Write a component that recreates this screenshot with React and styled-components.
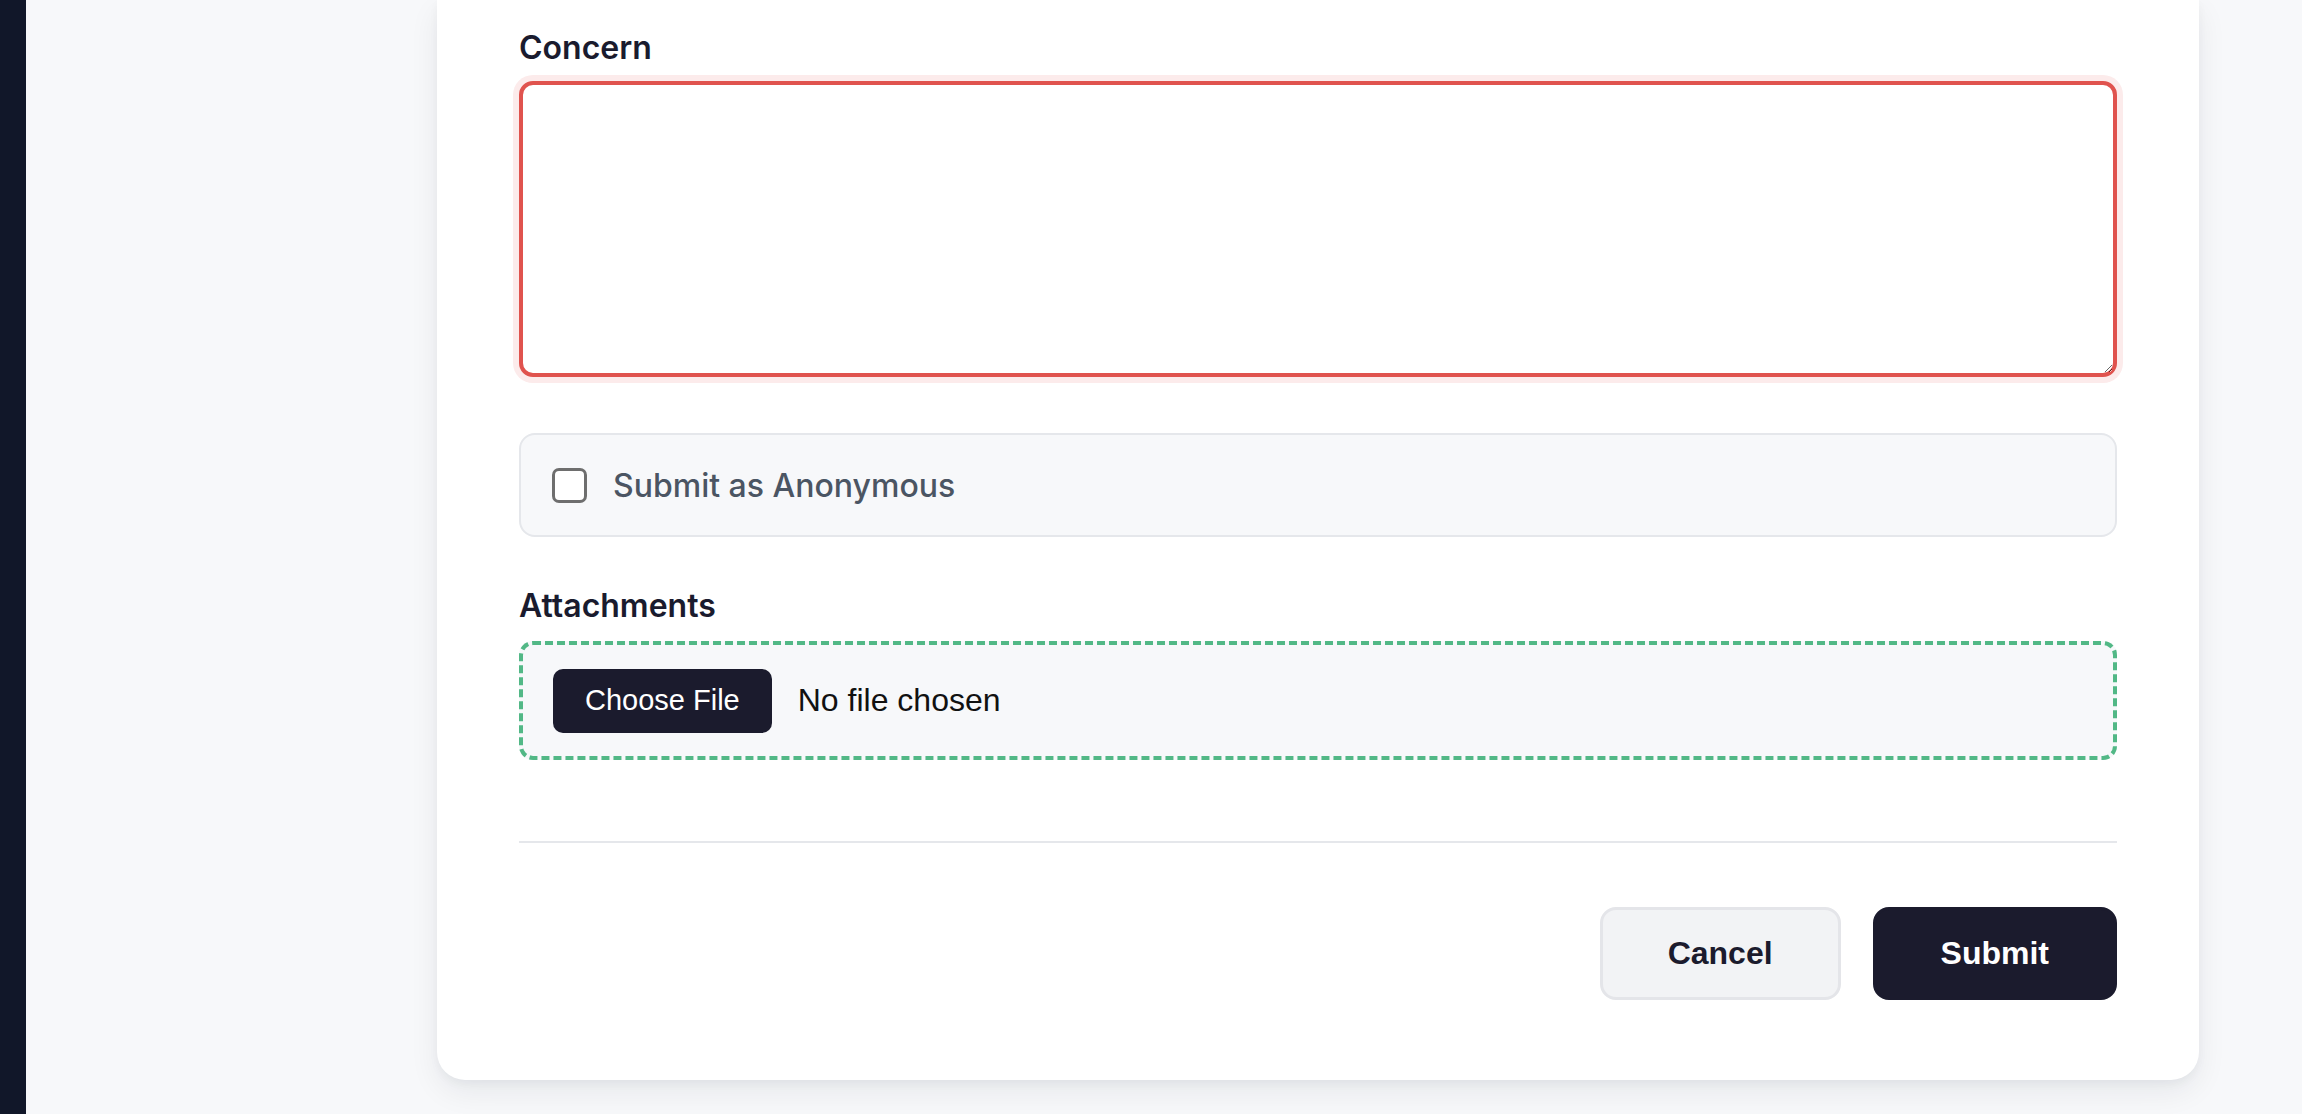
import React from 'react';
import styled, { createGlobalStyle } from 'styled-components';

const GlobalStyle = createGlobalStyle`
    * {
        box-sizing: border-box;
    }
    html, body {
        margin: 0;
        padding: 0;
        background: #f7f8fa;
        font-family: Inter, "Noto Sans", sans-serif;
    }
`

function App() {
    return (
        <Page>
            <GlobalStyle />
            <Sidebar />
            <Main>
                <Card>
                    <Label htmlFor="concern">Concern</Label>
                    <Concern id="concern" />

                    <AnonRow>
                        <Check type="checkbox" id="anon" />
                        <AnonText htmlFor="anon">Submit as Anonymous</AnonText>
                    </AnonRow>

                    <Label htmlFor="files" $top={49} $bottom={15}>Attachments</Label>
                    <DropZone>
                        <FileInput type="file" id="files" />
                    </DropZone>

                    <Divider />

                    <Actions>
                        <Button type="button">Cancel</Button>
                        <Button type="submit" $primary>Submit</Button>
                    </Actions>
                </Card>
            </Main>
        </Page>
    )
}

export default App

const Page = styled.div`
    display: flex;
    min-height: 100vh;
    background: #f7f8fa;
`

const Sidebar = styled.aside`
    width: 26px;
    flex-shrink: 0;
    background: #111729;
`

const Main = styled.main`
    flex: 1;
    padding: 0 0 34px 411px;
`

const Card = styled.form`
    width: 1762px;
    display: flex;
    flex-direction: column;
    background: #ffffff;
    padding: 28px 82px 80px;
    border-radius: 0 0 28px 28px;
    box-shadow: 0 12px 30px rgba(17, 24, 39, 0.07), 0 4px 10px rgba(17, 24, 39, 0.04);
`

const Label = styled.label`
    display: block;
    margin-top: ${p => p.$top || 0}px;
    margin-bottom: ${p => p.$bottom || 13}px;
    font-size: 32px;
    line-height: 40px;
    font-weight: 600;
    color: #1a1b2e;
`

const Concern = styled.textarea`
    display: block;
    width: 100%;
    height: 296px;
    border: 4px solid #e0534e;
    border-radius: 14px;
    box-shadow: 0 0 0 6px #fcebeb;
    outline: none;
    padding: 16px 24px;
    font-family: Inter, sans-serif;
    font-size: 32px;
    background: #fff;
`

const AnonRow = styled.div`
    display: flex;
    align-items: center;
    gap: 26px;
    margin-top: 56px;
    height: 104px;
    padding: 0 31px;
    background: #f7f8fa;
    border: 2px solid #e5e7eb;
    border-radius: 16px;
`

const Check = styled.input`
    appearance: none;
    margin: 0;
    width: 35px;
    height: 35px;
    background: #fff;
    border: 3px solid #6e6e6e;
    border-radius: 7px;
`

const AnonText = styled.label`
    font-size: 32px;
    font-weight: 500;
    color: #4b5563;
`

const DropZone = styled.div`
    display: flex;
    align-items: center;
    min-height: 119px;
    padding: 0 30px;
    background: #f7f8fa;
    border: 4px dashed #52b886;
    border-radius: 14px;
`

const FileInput = styled.input`
    font-family: "Liberation Sans", Arial, sans-serif;
    font-size: 32px;
    color: #111;

    &::file-selector-button {
        height: 64px;
        margin-right: 26px;
        padding: 0 32px;
        border: none;
        border-radius: 10px;
        background: #1b1b2d;
        color: #fff;
        font-family: "Liberation Sans", Arial, sans-serif;
        font-size: 29px;
        cursor: pointer;
    }
`

const Divider = styled.hr`
    width: 100%;
    margin: 81px 0 0;
    border: none;
    border-top: 2px solid #e5e7eb;
`

const Actions = styled.div`
    display: flex;
    justify-content: flex-end;
    gap: 32px;
    margin-top: 64px;
`

const Button = styled.button`
    height: 93px;
    padding: 0 65px;
    border-radius: 16px;
    border: 3px solid ${p => p.$primary ? '#1b1b2d' : '#e4e5e9'};
    background: ${p => p.$primary ? '#1b1b2d' : '#f2f3f5'};
    color: ${p => p.$primary ? '#ffffff' : '#1b1b2d'};
    font-family: "Liberation Sans", Arial, sans-serif;
    font-size: 32px;
    font-weight: 700;
    cursor: pointer;
`
